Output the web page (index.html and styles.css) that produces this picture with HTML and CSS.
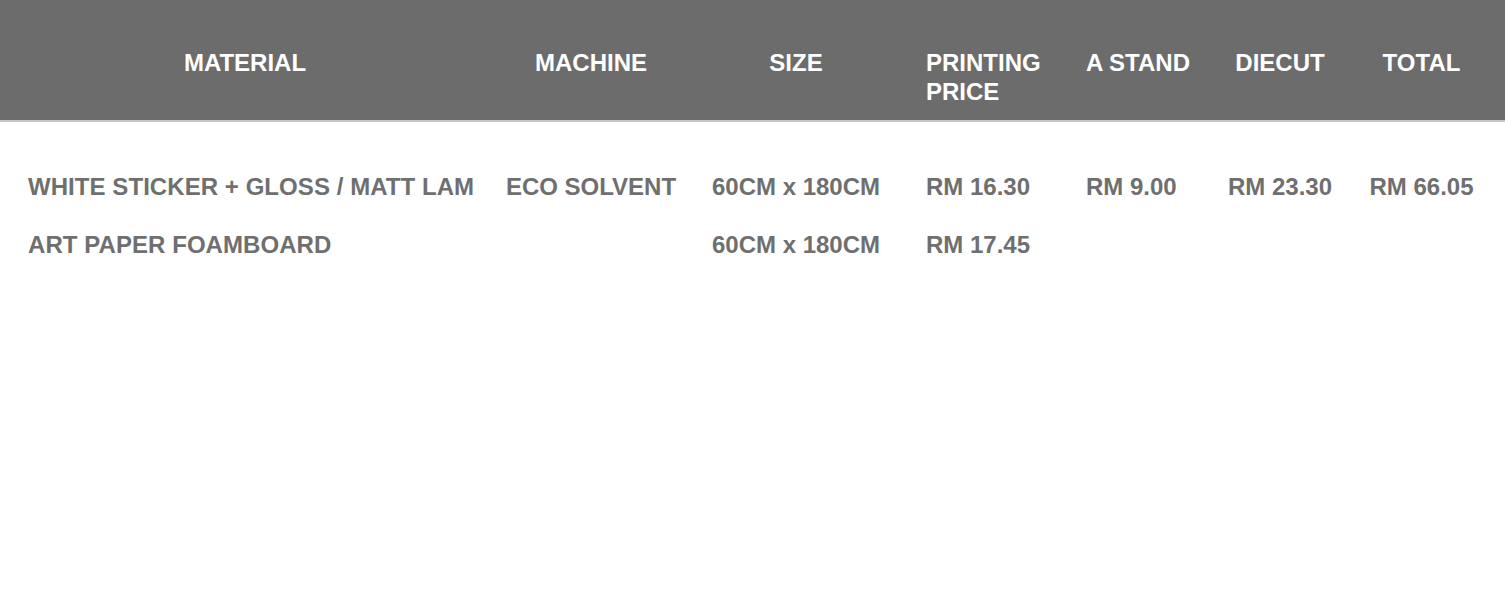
FILE: index.html
```html
<!DOCTYPE html>
<html lang="en">
<head>
<meta charset="utf-8">
<title>Price Table</title>
<link rel="stylesheet" href="styles.css">
</head>
<body>
<div class="price-table">
  <div class="row head">
    <div class="cell c-material">MATERIAL</div>
    <div class="cell c-center">MACHINE</div>
    <div class="cell c-center">SIZE</div>
    <div class="cell c-left c-print">PRINTING PRICE</div>
    <div class="cell c-left c-stand">A STAND</div>
    <div class="cell c-center">DIECUT</div>
    <div class="cell c-center">TOTAL</div>
  </div>
  <div class="body">
    <div class="row">
      <div class="cell c-material-body">WHITE STICKER + GLOSS / MATT LAM</div>
      <div class="cell c-center">ECO SOLVENT</div>
      <div class="cell c-center">60CM x 180CM</div>
      <div class="cell c-left c-print">RM 16.30</div>
      <div class="cell c-left c-stand">RM 9.00</div>
      <div class="cell c-center">RM 23.30</div>
      <div class="cell c-center">RM 66.05</div>
    </div>
    <div class="row">
      <div class="cell c-material-body">ART PAPER FOAMBOARD</div>
      <div class="cell c-center"></div>
      <div class="cell c-center">60CM x 180CM</div>
      <div class="cell c-left c-print">RM 17.45</div>
      <div class="cell c-left c-stand"></div>
      <div class="cell c-center"></div>
      <div class="cell c-center"></div>
    </div>
  </div>
</div>
</body>
</html>
```
FILE: styles.css
```css
html, body {
  margin: 0;
  padding: 0;
  background: #ffffff;
}

body {
  font-family: "Liberation Sans", Arial, Helvetica, sans-serif;
  font-weight: bold;
  font-size: 24px;
  line-height: 29px;
}

.price-table {
  width: 1505px;
}

.row {
  display: grid;
  grid-template-columns: 458px 234px 176px 186px 140px 140px 143px;
  padding-left: 16px;
}

.head {
  background: #6c6c6c;
  color: #ffffff;
  height: 122px;
  box-sizing: border-box;
  padding-top: 48px;
  border-bottom: 2px solid #c6c6c6;
}

.body {
  padding-top: 50px;
  color: #6f6f6f;
  display: flex;
  flex-direction: column;
  gap: 29px;
}

.cell {
  white-space: nowrap;
}

.c-material {
  text-align: center;
}

.c-material-body {
  text-align: left;
  padding-left: 12px;
  letter-spacing: 0.06px;
}

.c-center {
  text-align: center;
}

.c-left {
  text-align: left;
}

.c-print {
  padding-left: 42px;
  white-space: normal;
}

.head .c-print {
  width: 120px;
}

.c-stand {
  padding-left: 16px;
}
```
